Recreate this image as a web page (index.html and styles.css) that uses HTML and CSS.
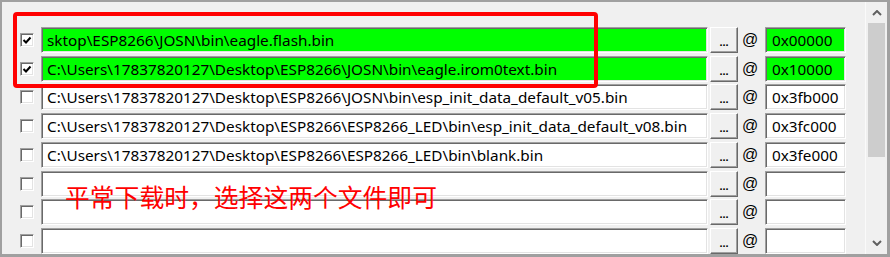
FILE: index.html
```html
<!DOCTYPE html>
<html lang="zh-CN">
<head>
<meta charset="UTF-8">
<title>ESP8266 Download Tool</title>
<link rel="stylesheet" href="styles.css">
</head>
<body>

<div class="panel">
  <div class="list">
    <div class="row on">
      <span class="check"><svg viewBox="0 0 10 10"><path d="M1.5 5 L4 7.5 L8.5 2.5"/></svg></span>
      <div class="path">sktop\ESP8266\JOSN\bin\eagle.flash.bin</div>
      <button class="browse">...</button>
      <span class="at">@</span>
      <div class="addr">0x00000</div>
    </div>
    <div class="row on">
      <span class="check"><svg viewBox="0 0 10 10"><path d="M1.5 5 L4 7.5 L8.5 2.5"/></svg></span>
      <div class="path">C:\Users\17837820127\Desktop\ESP8266\JOSN\bin\eagle.irom0text.bin</div>
      <button class="browse">...</button>
      <span class="at">@</span>
      <div class="addr">0x10000</div>
    </div>
    <div class="row">
      <span class="check"></span>
      <div class="path">C:\Users\17837820127\Desktop\ESP8266\JOSN\bin\esp_init_data_default_v05.bin</div>
      <button class="browse">...</button>
      <span class="at">@</span>
      <div class="addr">0x3fb000</div>
    </div>
    <div class="row">
      <span class="check"></span>
      <div class="path">C:\Users\17837820127\Desktop\ESP8266\ESP8266_LED\bin\esp_init_data_default_v08.bin</div>
      <button class="browse">...</button>
      <span class="at">@</span>
      <div class="addr">0x3fc000</div>
    </div>
    <div class="row">
      <span class="check"></span>
      <div class="path">C:\Users\17837820127\Desktop\ESP8266\ESP8266_LED\bin\blank.bin</div>
      <button class="browse">...</button>
      <span class="at">@</span>
      <div class="addr">0x3fe000</div>
    </div>
    <div class="row">
      <span class="check"></span>
      <div class="path"></div>
      <button class="browse">...</button>
      <span class="at">@</span>
      <div class="addr"></div>
    </div>
    <div class="row">
      <span class="check"></span>
      <div class="path"></div>
      <button class="browse">...</button>
      <span class="at">@</span>
      <div class="addr"></div>
    </div>
    <div class="row">
      <span class="check"></span>
      <div class="path"></div>
      <button class="browse">...</button>
      <span class="at">@</span>
      <div class="addr"></div>
    </div>

    <div class="mark"></div>
    <div class="note">平常下载时，选择这两个文件即可</div>
  </div>

  <div class="scrollbar">
    <svg class="arrow" viewBox="0 0 10 6"><path d="M1 5 L5 1 L9 5"/></svg>
    <div class="track"><div class="thumb"></div></div>
    <svg class="arrow" viewBox="0 0 10 6"><path d="M1 1 L5 5 L9 1"/></svg>
  </div>
</div>

</body>
</html>
```

FILE: styles.css
```css
/* download list panel */
body {
  margin: 0;
  padding: 0;
  background: #f0f0f0;
  font-family: "Noto Sans", "Liberation Sans", sans-serif;
}
.panel {
  width: 890px;
  height: 257px;
  box-sizing: border-box;
  border: 2px solid #a0a0a0;
  border-right-width: 3px;
  border-bottom-width: 3px;
  background: #f0f0f0;
  display: flex;
}
.list {
  position: relative;
  width: 864px;
  padding-top: 25px;
  display: flex;
  flex-direction: column;
  gap: 2.71px;
}
.row {
  display: flex;
  align-items: center;
  height: 26px;
  padding-left: 18px;
}
.check {
  width: 14px;
  height: 14px;
  box-sizing: border-box;
  background: #fff;
  border: 1px solid;
  border-color: #a0a0a0 #fff #fff #a0a0a0;
  box-shadow: inset 1px 1px #696969, inset -1px -1px #e3e3e3;
  margin-right: 7px;
  display: flex;
  align-items: center;
  justify-content: center;
}
.check svg {
  width: 10px;
  height: 10px;
  fill: none;
  stroke: #000;
  stroke-width: 2;
}
.path, .addr {
  height: 26px;
  box-sizing: border-box;
  background: #fff;
  border: 1px solid;
  border-color: #a0a0a0 #fff #fff #a0a0a0;
  box-shadow: inset 1px 1px #696969, inset -1px -1px #e3e3e3;
  font-size: 15.3px;
  line-height: 24px;
  white-space: nowrap;
  overflow: hidden;
  color: #000;
}
.path {
  width: 667px;
  padding-left: 5px;
}
.addr {
  width: 81px;
  padding-left: 6px;
}
.row.on .path, .row.on .addr {
  background: #00ff00;
}
.browse {
  width: 28px;
  height: 26px;
  margin-left: 2px;
  padding: 0;
  background: #f0f0f0;
  border: 1px solid;
  border-color: #fff #696969 #696969 #fff;
  box-shadow: inset -1px -1px #a0a0a0;
  font-family: "Liberation Sans", sans-serif;
  font-size: 11px;
  font-weight: bold;
  line-height: 28px;
  color: #000;
}
.at {
  width: 27px;
  padding-left: 4px;
  box-sizing: border-box;
  font-family: "Liberation Sans", sans-serif;
  font-size: 16px;
}
.mark {
  position: absolute;
  left: 11px;
  top: 10px;
  width: 577px;
  height: 68px;
  border: 4px solid #ff0000;
  border-radius: 4px;
}
.note {
  position: absolute;
  left: 63px;
  top: 179px;
  font-family: "Noto Sans CJK SC", sans-serif;
  font-size: 24.8px;
  line-height: 30px;
  color: #ff0000;
}
.scrollbar {
  width: 21px;
  border-left: 1px solid #fafafa;
  display: flex;
  flex-direction: column;
  align-items: center;
}
.arrow {
  width: 10px;
  height: 6px;
  fill: none;
  stroke: #606060;
  stroke-width: 2;
  margin: 8px 0;
}
.track {
  flex: 1;
  width: 100%;
  margin-top: -1px;
}
.thumb {
  width: 17px;
  height: 134px;
  margin: 0 auto;
  background: #cdcdcd;
}
```
